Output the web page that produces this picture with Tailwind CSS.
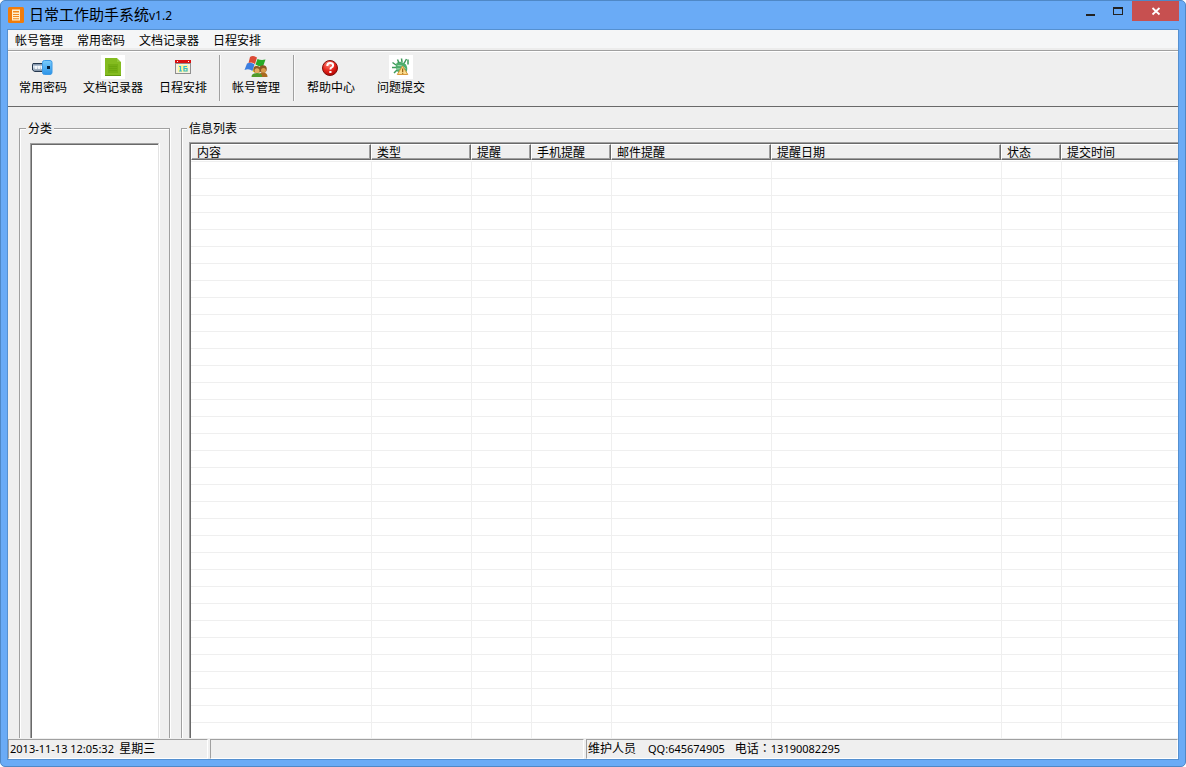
<!DOCTYPE html>
<html lang="zh-CN">
<head>
<meta charset="utf-8">
<title>日常工作助手系统v1.2</title>
<script src="https://cdn.jsdelivr.net/npm/@tailwindcss/browser@4"></script>
</head>
<body class="bg-white font-['Noto_Sans_CJK_SC',sans-serif] text-xs text-black">
<div class="flex h-screen flex-col overflow-hidden rounded-[5px] border border-[#4f88c6] bg-[#6aabf6]">
  <header class="flex h-7 shrink-0 items-start justify-between pr-1.5 pl-[7px]">
    <div class="flex h-7 items-center gap-[5px]">
      <svg class="h-4 w-4" viewBox="0 0 16 16" aria-hidden="true">
        <rect width="16" height="16" rx="1.5" fill="#f07c0c"/>
        <path d="M4 2.5h8v11H4z" fill="#fff0cf"/>
        <path d="M5 4h6v1.5H5zM5 7h6v1H5zM5 9h6v1H5zM5 11.2h6v1H5z" fill="#f28a20"/>
      </svg>
      <h1 class="pb-0.5 text-[15px] leading-5">日常工作助手系统<span class="font-['Noto_Sans',sans-serif] text-xs">v1.2</span></h1>
    </div>
    <div class="flex h-5">
      <button aria-label="最小化" class="flex w-7 items-center justify-center"><svg class="h-4 w-4" viewBox="0 0 16 16"><path d="M4 11h9v2H4z" fill="#222"/></svg></button>
      <button aria-label="最大化" class="flex w-7 items-center justify-center"><svg class="h-4 w-4" viewBox="0 0 16 16" shape-rendering="crispEdges"><path fill-rule="evenodd" d="M3 4h10v8H3zM4 6h8v5H4z" fill="#222"/></svg></button>
      <button aria-label="关闭" class="flex w-[47px] items-center justify-center bg-[#c75050]"><svg class="h-4 w-4" viewBox="0 0 16 16"><path d="M4.5 5l7 6.500M11.500 5l-7 6.500" stroke="#fff" stroke-width="1.800"/></svg></button>
    </div>
  </header>

  <div class="mx-1.5 mb-1.5 flex min-h-0 flex-1 flex-col overflow-hidden border border-[#5590d0] bg-[#efefef]">
    <nav class="flex h-[21px] shrink-0 items-center border-b border-[#a0a0a0] bg-[#f5f6f7] pb-px shadow-[inset_0_-2px_0_#ececec]">
      <button class="px-[7px] leading-[18px]">帐号管理</button>
      <button class="px-[7px] leading-[18px]">常用密码</button>
      <button class="px-[7px] leading-[18px]">文档记录器</button>
      <button class="px-[7px] leading-[18px]">日程安排</button>
    </nav>

    <div role="toolbar" class="flex h-14 shrink-0 items-start border-t border-b border-t-white border-b-[#696969] pt-[3px] pl-[3px]">
      <button class="flex flex-col items-center px-2">
        <svg class="h-6 w-6" viewBox="0 0 24 24" aria-hidden="true">
          <defs>
            <linearGradient id="steel" x2="0" y2="1"><stop stop-color="#5f7590"/><stop offset=".4" stop-color="#dfeaf4"/><stop offset="1" stop-color="#6f8298"/></linearGradient>
            <linearGradient id="blue" x2="0" y2="1"><stop stop-color="#7accfb"/><stop offset="1" stop-color="#2b93e8"/></linearGradient>
          </defs>
          <path d="M2 8.500h10v8H3.500L1.500 15V9.500z" fill="url(#steel)" stroke="#25384e"/>
          <path d="M5 11v3M8 11v3M11 11v3" stroke="#fff" stroke-width="1.500"/>
          <rect x="11.500" y="5.500" width="9.500" height="14" rx="2" fill="url(#blue)" stroke="#3d9ae6"/>
          <rect x="16" y="11" width="3" height="3" fill="#071f38"/>
        </svg>
        <span class="leading-4">常用密码</span>
      </button>
      <button class="flex flex-col items-center px-2">
        <svg class="h-6 w-6 bg-white" viewBox="0 0 24 24" aria-hidden="true">
          <path d="M4 3h12v2h2v2h2v14H4z" fill="#84bc20"/>
          <path d="M16 3l4 4h-4z" fill="#93c83c"/>
          <path d="M7 9h10v9H7z" fill="#76b015"/>
          <path d="M8 11.500h8M8 13.500h8M8 15.500h8" stroke="#6ca70f"/>
          <path d="M4 20h16v1H4z" fill="#62990f"/>
        </svg>
        <span class="leading-4">文档记录器</span>
      </button>
      <button class="flex flex-col items-center px-2">
        <svg class="h-6 w-6" viewBox="0 0 24 24" aria-hidden="true">
          <path d="M4 5h16v14H4z" fill="#8f8f8f"/>
          <path d="M5 9h14v9H5z" fill="#f5f1e2"/>
          <path d="M4 5h16v3H4z" fill="#d81010"/>
          <path d="M6 6h1v1H6zM17 6h1v1h-1z" fill="#fff"/>
          <path d="M7 10h10v7H7z" fill="#fff69a"/>
          <path d="M8 11.500h1.500V16M8 16h3M16 11.500h-3V16h3v-2.500h-3" fill="none" stroke="#31b6d4" stroke-width="1.200"/>
        </svg>
        <span class="leading-4">日程安排</span>
      </button>
      <div class="mr-[3px] ml-1 h-[46px] w-0.5 border-r border-l border-r-[#fafafa] border-l-[#a0a0a0]"></div>
      <button class="flex flex-col items-center px-2">
        <svg class="h-6 w-6" viewBox="0 0 24 24" aria-hidden="true">
          <path d="M6 2Q9 0 13 2.500L11 9Q8 6.500 4.500 8z" fill="#dc4b35"/>
          <path d="M13.500 4Q17 5.500 21.500 4.500L19 11.500Q15 12 11.500 9.500z" fill="#27ab28"/>
          <path d="M3 8.500Q7 6.500 10.500 9.500L8.500 16Q5 13 .5 15z" fill="#3d7fe0"/>
          <path d="M11 10.500Q14 12.500 18 12L15 18Q12 18.500 8.500 16.500z" fill="#f3df22"/>
          <circle cx="19" cy="14" r="3.800" fill="#8c5724"/><circle cx="19.500" cy="15.500" r="2.500" fill="#d99a4c"/>
          <path d="M14.500 22q0-4.500 4.500-4.500t4.500 4.500z" fill="#a8691f"/>
          <circle cx="13" cy="14.500" r="3.600" fill="#8c5a26"/><circle cx="13" cy="15.800" r="2.500" fill="#e3ad63"/>
          <path d="M7.500 22q0-4 5.500-4t5 4z" fill="#509a2b"/>
        </svg>
        <span class="leading-4">帐号管理</span>
      </button>
      <div class="mr-1 ml-[5px] h-[46px] w-0.5 border-r border-l border-r-[#fafafa] border-l-[#a0a0a0]"></div>
      <button class="flex flex-col items-center px-2">
        <svg class="h-6 w-6" viewBox="0 0 24 24" aria-hidden="true">
          <defs><radialGradient id="red" cx=".4" cy=".25" r=".8"><stop stop-color="#ff8a7c"/><stop offset=".5" stop-color="#ea2a20"/><stop offset="1" stop-color="#a00"/></radialGradient></defs>
          <circle cx="11" cy="13" r="7.500" fill="url(#red)" stroke="#7c100c"/>
          <path d="M8.300 11q0-3 2.900-3t2.900 2.500q0 1.500-1.700 2.200-1 .5-1 1.800" fill="none" stroke="#fff" stroke-width="2"/>
          <path d="M10.300 16h2.200v2h-2.200z" fill="#fff"/>
        </svg>
        <span class="leading-4">帮助中心</span>
      </button>
      <button class="ml-1.5 flex flex-col items-center px-2">
        <svg class="h-6 w-6 bg-white" viewBox="0 0 24 24" aria-hidden="true">
          <path d="M7.500 8Q12 5 17 9.500Q19.500 14 17 18L9.500 18Q5.500 13 7.500 8z" fill="#4fae6c"/>
          <path d="M3.500 7.500L7 10M3 12.500l4 0M5 18l3-3M8.500 4.500L10 8M12.500 3.500L13 7M17.500 4L15 8.500M19 4.500v5" fill="none" stroke="#3d9959" stroke-width="1.500"/>
          <path d="M8.500 10.500q4-1 8 3M8 14q2.500-1 5 1" fill="none" stroke="#a9dcb5"/>
          <path d="M13.500 11L18.800 19.500H8.300z" fill="#fbdc8c" stroke="#d7983a"/>
          <path d="M13 13.500h1.300V17H13zM13 17.700h1.300v1H13z" fill="#9c6012"/>
        </svg>
        <span class="leading-4">问题提交</span>
      </button>
    </div>

    <main class="flex min-h-0 flex-1 overflow-hidden pt-3.5 pl-[11px]">
      <fieldset class="-mb-2 flex w-[151px] shrink-0 flex-col border border-[#a0a0a0] px-2.5 shadow-[inset_1px_1px_0_#fff,1px_0_0_#fff]">
        <legend class="-ml-1 bg-[#efefef] px-0.5 leading-[14px]">分类</legend>
        <div class="mt-2 h-screen border border-[#a0a0a0] border-r-[#e3e3e3] bg-white shadow-[inset_1px_1px_0_#696969,1px_0_0_#fff]"></div>
      </fieldset>
      <fieldset class="-mb-2 ml-[11px] min-w-0 flex-1 border-t border-l border-[#a0a0a0] pl-[7px] shadow-[inset_1px_1px_0_#fff]">
        <legend class="-ml-0.5 bg-[#efefef] px-0.5 leading-[14px]">信息列表</legend>
        <div class="mt-[7px] h-screen overflow-hidden border-t border-l border-[#a0a0a0] bg-white">
          <div class="border-t border-l border-[#696969]">
            <table class="w-full table-fixed border-separate border-spacing-0 text-left">
              <colgroup><col class="w-[180px]"><col class="w-[100px]"><col class="w-[60px]"><col class="w-20"><col class="w-40"><col class="w-[230px]"><col class="w-[60px]"><col></colgroup>
              <thead>
                <tr class="*:h-4 *:border-t *:border-b *:border-l *:border-t-white *:border-r-[#696969] *:border-b-[#696969] *:border-l-white *:bg-[#efefef] *:py-0 *:pr-0 *:pl-[5px] *:leading-[14px] *:font-normal *:not-last:border-r *:not-last:shadow-[inset_-1px_-1px_0_#a0a0a0] *:last:shadow-[inset_0_-1px_0_#a0a0a0]">
                  <th>内容</th><th>类型</th><th>提醒</th><th>手机提醒</th><th>邮件提醒</th><th>提醒日期</th><th>状态</th><th>提交时间</th>
                </tr>
              </thead>
              <tbody id="rows" class="before:block before:h-px"></tbody>
            </table>
          </div>
        </div>
      </fieldset>
    </main>

    <footer class="flex h-[21px] shrink-0 gap-0.5 bg-[#efefef] pt-px leading-4 *:border-t *:border-r *:border-b *:border-l *:border-t-[#a0a0a0] *:border-r-white *:border-b-white *:border-l-[#a0a0a0]">
      <div class="w-[200px] shrink-0 pl-px whitespace-pre"><span class="font-['Noto_Sans',sans-serif] text-[11px]">2013-11-13 12:05:32</span>  星期三</div>
      <div class="w-[374px] shrink-0"></div>
      <div class="flex-1 pl-px whitespace-nowrap"><span class="mr-3">维护人员</span><span class="mr-2.5 font-['Noto_Sans',sans-serif] text-[11px]">QQ:645674905</span><span>电话<span lang="zh-TW" class="font-['Noto_Sans_CJK_TC',sans-serif]">：</span></span><span class="font-['Noto_Sans',sans-serif] text-[11px]">13190082295</span></div>
    </footer>
  </div>
</div>
<script>
  // Empty grid rows fill the list below its header.
  const body = document.getElementById('rows');
  for (let r = 0; r < 80; r++) {
    const row = body.insertRow();
    for (let c = 0; c < 8; c++) {
      row.insertCell().className = c ? 'h-[17px] border-t border-l border-[#efefef] p-0' : 'h-[17px] border-t border-[#efefef] p-0';
    }
  }
</script>
</body>
</html>
